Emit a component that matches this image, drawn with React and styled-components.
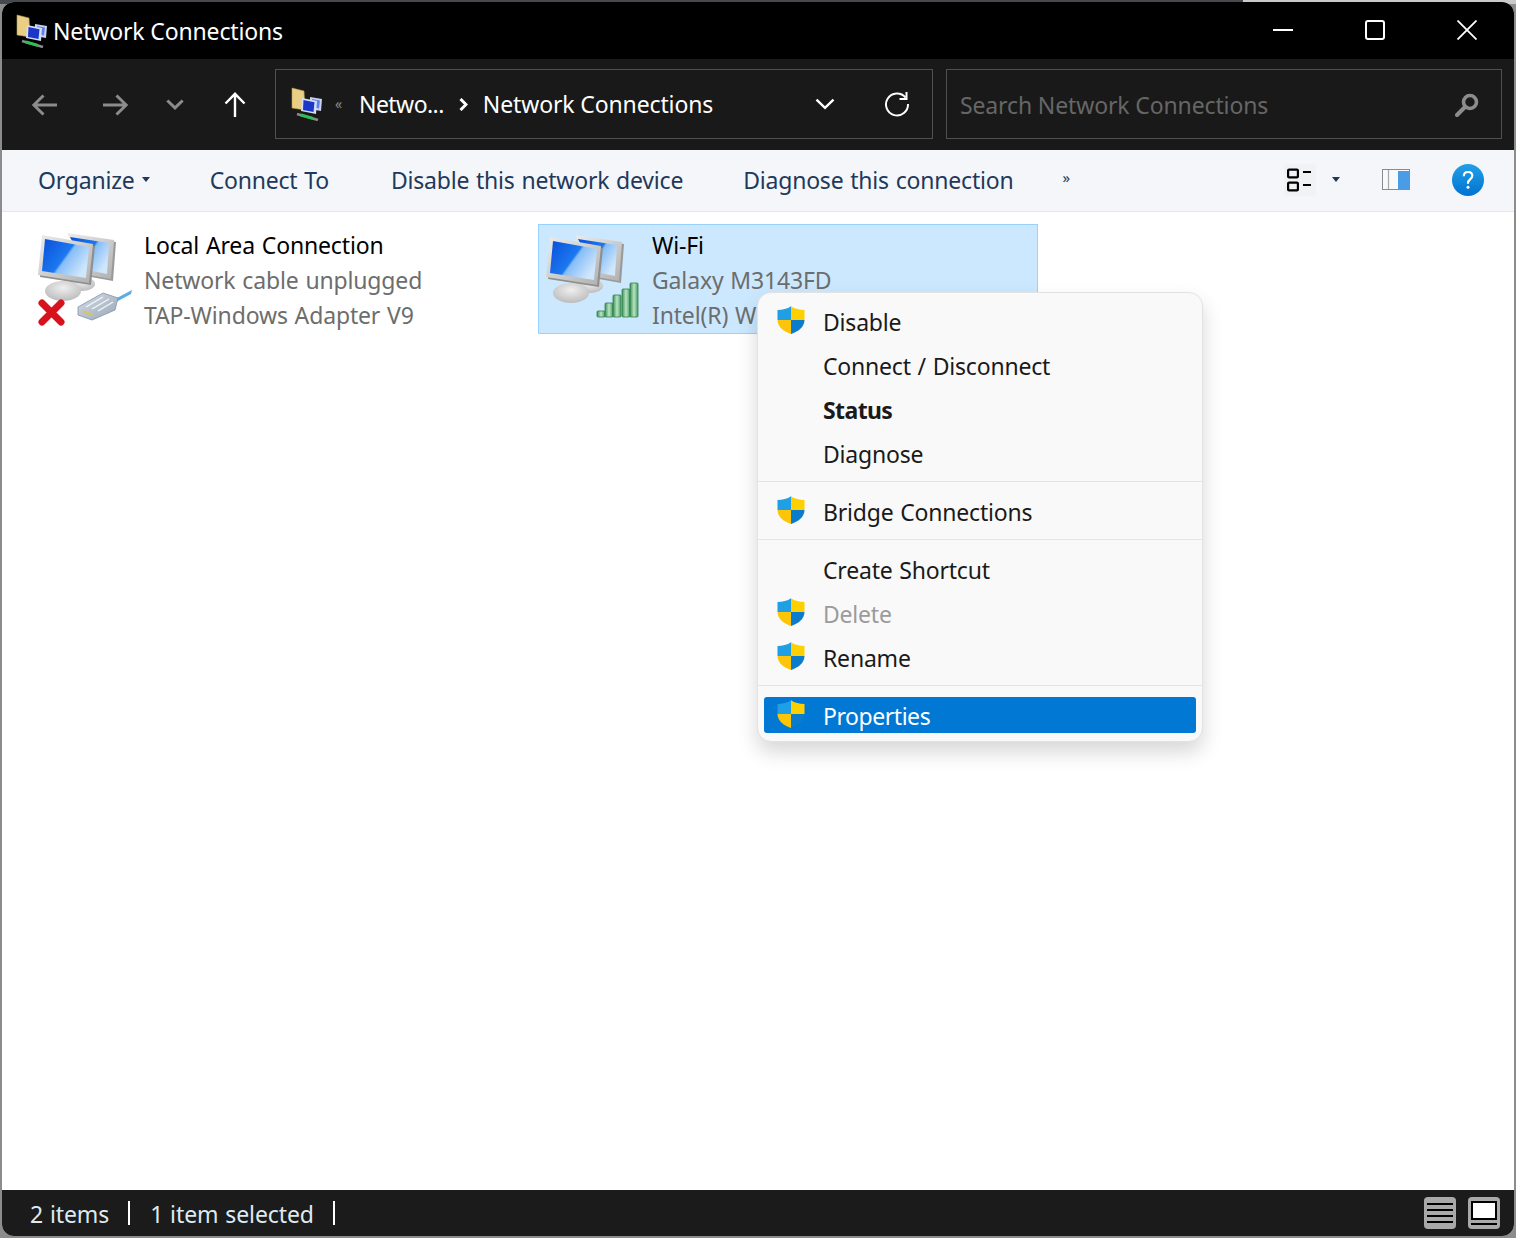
import React from 'react'
import styled, { createGlobalStyle } from 'styled-components'

const Global = createGlobalStyle`
  html, body { margin: 0; padding: 0; }
  body {
    width: 1516px;
    height: 1238px;
    overflow: hidden;
    background: linear-gradient(90deg, #46494e 0, #46494e 82%, #c9c9c9 82%) 0 0 / 100% 4px no-repeat, #8c8c8c;
    font-family: "Noto Sans", "Open Sans", "Liberation Sans", sans-serif;
    letter-spacing: -0.1px;
  }
`

const Desktop = styled.div`
  box-sizing: border-box;
  height: 1238px;
  padding: 2px;
`

const Window = styled.div`
  height: 1234px;
  display: flex;
  flex-direction: column;
  overflow: hidden;
  border-radius: 12px;
  background: #fff;
`

const TitleBar = styled.div`
  flex: 0 0 57px;
  display: flex;
  align-items: center;
  background: #000;
  color: #fff;
  padding-left: 12px;
`

const WindowTitle = styled.span`
  margin-left: 5px;
  padding-top: 1px;
  font-size: 23px;
  letter-spacing: -0.15px;
`

const WinControls = styled.div`
  margin: -2px 1px 0 auto;
  display: flex;
`

const WinBtn = styled.div`
  width: 92px;
  height: 57px;
  display: flex;
  align-items: center;
  justify-content: center;
`

const NavBar = styled.div`
  flex: 0 0 91px;
  box-sizing: border-box;
  display: flex;
  align-items: center;
  background: #191919;
  padding: 0 12px 1px 8px;
`

const NavBtn = styled.div`
  width: ${(p) => p.$w || 70}px;
  height: 70px;
  display: flex;
  align-items: center;
  justify-content: center;
  padding-top: 1px;
`

const FieldBox = styled.div`
  box-sizing: border-box;
  height: 70px;
  display: flex;
  align-items: center;
  border: 1px solid #4f4f4f;
  color: #fff;
  font-size: 23px;
  letter-spacing: -0.13px;
`

const AddressBox = styled(FieldBox)`
  width: 658px;
  margin-left: 5px;
  padding-left: 13px;
`

const SearchBox = styled(FieldBox)`
  flex: 1;
  margin-left: 13px;
  padding: 2px 22px 0 13px;
  color: #666;
  justify-content: space-between;
`

const Crumb = styled.span`
  white-space: nowrap;
  letter-spacing: ${(p) => (p.$tight ? '-0.55px' : 'inherit')};
`

const CrumbSep = styled.span`
  margin: 0 15px 0 15px;
  display: flex;
`

const Overflow = styled.span`
  margin: 0 17px 0 12px;
  color: #8a8a8a;
  font-size: 14px;
  line-height: 1;
`

const AddressEnd = styled.div`
  margin-left: auto;
  display: flex;
  align-items: center;
  gap: 49px;
  padding-right: 22px;
`

const Toolbar = styled.div`
  flex: 0 0 62px;
  box-sizing: border-box;
  display: flex;
  align-items: center;
  gap: 60px;
  padding: 0 30px 2px 36px;
  background: #f4f6f9;
  border-bottom: 1px solid #e3e6ea;
  color: #1e395b;
  font-size: 23px;
`

const ToolItem = styled.span`
  display: flex;
  align-items: center;
  gap: 7px;
  white-space: nowrap;
  letter-spacing: -0.2px;
  word-spacing: 1px;
  padding-right: ${(p) => p.$extra || 0}px;
`

const More = styled.span`
  margin: -4px 0 0 -11px;
  font-size: 15px;
  line-height: 1;
`

const ToolIcons = styled.div`
  margin-left: auto;
  display: flex;
  align-items: center;
`

const ViewBtn = styled.div`
  width: 32px;
  height: 32px;
  display: flex;
  align-items: center;
  justify-content: center;
  background: #f1f2f4;
  border-radius: 3px;
`

const ViewCaret = styled.span`
  margin: 0 42px 0 16px;
  display: flex;
`

const PaneBtn = styled.span`
  display: flex;
  margin-right: 42px;
`

const Content = styled.div`
  flex: 1;
  position: relative;
  display: flex;
  align-items: flex-start;
  gap: 8px;
  padding: 12px 0 0 28px;
`

const Tile = styled.div`
  box-sizing: border-box;
  width: 500px;
  height: 110px;
  display: flex;
  padding: 3px 0 0 3px;
  background: ${(p) => (p.$selected ? '#cce8ff' : 'transparent')};
  border: 1px solid ${(p) => (p.$selected ? '#99d1ff' : 'transparent')};
`

const TileText = styled.div`
  margin: -3px 0 0 10px;
  padding-top: 3px;
  font-size: 23px;
  line-height: 35px;
  letter-spacing: -0.15px;
  word-spacing: 1px;
  color: #6d6d6d;
  white-space: nowrap;
`

const TileName = styled.div`
  color: #000;
`

const Menu = styled.div`
  position: absolute;
  left: 755px;
  top: 80px;
  box-sizing: border-box;
  width: 446px;
  height: 450px;
  padding-top: 8px;
  background: #f9f9f9;
  border: 1px solid #e2e2e2;
  border-radius: 14px;
  box-shadow: 0 10px 20px rgba(0, 0, 0, 0.16);
  font-size: 23px;
  color: #1a1a1a;
  word-spacing: 1px;
  letter-spacing: -0.2px;
`

const MenuRow = styled.div`
  box-sizing: border-box;
  height: 44px;
  display: flex;
  align-items: center;
  padding: 0 0 2px 19px;
  font-weight: ${(p) => (p.$bold ? 700 : 400)};
  letter-spacing: ${(p) => (p.$bold ? '-0.6px' : 'inherit')};
  color: ${(p) => (p.$disabled ? '#9b9b9b' : 'inherit')};
`

const HotRow = styled(MenuRow)`
  height: 36px;
  margin: 0 6px;
  padding: 1px 0 0 13px;
  background: #0078d4;
  color: #fff;
  letter-spacing: -0.45px;
  border-radius: 3px;
`

const ShieldSlot = styled.span`
  flex: 0 0 28px;
  height: 28px;
  margin: -4px 18px 0 0;
`

const MenuSep = styled.div`
  height: 1px;
  margin: ${(p) => (p.$last ? '4px 0 11px' : '4px 0 9px')};
  background: #e4e4e4;
`

const StatusBar = styled.div`
  flex: 0 0 46px;
  box-sizing: border-box;
  display: flex;
  align-items: center;
  padding: 0 14px 0 28px;
  background: #1b1b1b;
  color: #dfe9f2;
  font-size: 23px;
  word-spacing: 1px;
`

const StatusPart = styled.span`
  white-space: nowrap;
  padding: 2px 21px 0 0;
  margin-right: 20px;
  position: relative;
  &::after {
    content: '';
    position: absolute;
    right: 0;
    top: 5px;
    bottom: 5px;
    width: 2px;
    background: #fff;
  }
`

const StatusIcons = styled.div`
  margin-left: auto;
  display: flex;
  gap: 12px;
`

const StatusBtn = styled.div`
  width: 32px;
  height: 32px;
  display: flex;
  align-items: center;
  justify-content: center;
  background: #a9a9a9;
  border-radius: 4px;
`

const Arrow = ({ dir = 'left', color = '#8c8c8c' }) => {
  const turn = { left: 0, right: 180, up: 90 }[dir]
  return (
    <svg width="26" height="26" viewBox="0 0 26 26" style={{ transform: `rotate(${turn}deg)` }}>
      <path d="M1.5 13H25M11.5 3.500L1.800 13l9.700 9.500" fill="none" stroke={color} strokeWidth={dir === 'up' ? 2.4 : 3} />
    </svg>
  )
}

const Chevron = ({ color = '#8c8c8c', w = 18, sw = 3 }) => (
  <svg width={w} height={w * 0.6} viewBox="0 0 18 11">
    <path d="M1.200 1.500L9 9l7.800-7.500" fill="none" stroke={color} strokeWidth={sw} />
  </svg>
)

const Caret = ({ color = '#1e395b' }) => (
  <svg width="8" height="5" viewBox="0 0 8 5">
    <path d="M0 0h8L4 5z" fill={color} />
  </svg>
)

const Shield = () => (
  <svg width="28" height="28" viewBox="0 0 28 28">
    <path d="M14 .3C10.500 3 5.500 4 .5 4v10h13.500z" fill="#1f9fe4" />
    <path d="M14 .3C17.500 3 22.500 4 27.500 4v10H14z" fill="#ffd000" />
    <path d="M.5 14c0 7 6.500 11.800 13.500 14V14z" fill="#fdc50a" />
    <path d="M27.500 14c0 7-6.500 11.800-13.500 14V14z" fill="#0b7bcb" />
  </svg>
)

const MonitorDefs = () => (
  <defs>
    <linearGradient id="screen" x1="0" y1="0" x2="1" y2="0.6">
      <stop offset="0" stopColor="#0a50d8" />
      <stop offset="0.55" stopColor="#1c78f0" />
      <stop offset="0.6" stopColor="#86bdf8" />
      <stop offset="1" stopColor="#cfe6fb" />
    </linearGradient>
    <linearGradient id="bezel" x1="0" y1="0" x2="1" y2="1">
      <stop offset="0" stopColor="#ececec" />
      <stop offset="1" stopColor="#b0b0b0" />
    </linearGradient>
    <radialGradient id="foot" cx="0.5" cy="0.35" r="0.65">
      <stop offset="0" stopColor="#efefef" />
      <stop offset="1" stopColor="#bcbcbc" />
    </radialGradient>
    <linearGradient id="bar" x1="0" y1="0" x2="1" y2="0">
      <stop offset="0" stopColor="#3f8f5a" />
      <stop offset="0.5" stopColor="#b8e6c0" />
      <stop offset="1" stopColor="#4b9a66" />
    </linearGradient>
    <linearGradient id="plug" x1="0" y1="0" x2="1" y2="1">
      <stop offset="0" stopColor="#d6dde6" />
      <stop offset="1" stopColor="#97a6b6" />
    </linearGradient>
  </defs>
)

const Monitors = () => (
  <g>
    <path d="M35 7l47 7-3 39-22-4z" fill="#9a9a9a" />
    <path d="M33 5l47 7-3 39-22-4z" fill="url(#bezel)" />
    <path d="M36 9l39 6-2 31-20-4z" fill="url(#screen)" />
    <ellipse cx="48" cy="56" rx="13" ry="7" fill="url(#foot)" />
    <ellipse cx="29" cy="63" rx="18" ry="10" fill="url(#foot)" />
    <path d="M10 9l51 9-4 39L6 49z" fill="#8f8f8f" />
    <path d="M8 7l51 9-4 39L4 47z" fill="url(#bezel)" />
    <path d="M11 11l44 8-3 31L8 43z" fill="url(#screen)" />
  </g>
)

const LanIcon = () => (
  <svg width="100" height="100" viewBox="0 0 100 100">
    <MonitorDefs />
    <Monitors />
    <path d="M8 75l19 19M27 75L8 94" stroke="#d8121c" strokeWidth="7" strokeLinecap="round" />
    <path d="M81 71l17-9-1 4-15 8z" fill="#58aee2" />
    <path d="M44 79l25-14 15 5-3 12-23 10-14-5z" fill="url(#plug)" stroke="#8294a8" strokeWidth="0.800" />
    <path d="M52 79l17-10M58 81l17-10M64 83l15-9" stroke="#f2f5f8" strokeWidth="1.400" />
    <path d="M49 82l10 4-1 2-10-4z" fill="#d6c56a" />
  </svg>
)

const WifiIcon = () => (
  <svg width="100" height="100" viewBox="0 0 100 100">
    <MonitorDefs />
    <g transform="translate(0 2)">
      <Monitors />
    </g>
    {[[0, 6], [8, 14], [16, 22], [25, 28], [33, 34]].map(([x, h]) => (
      <rect key={x} x={55 + x} y={89 - h} width="8" height={h} rx="1" fill="url(#bar)" stroke="#2f7f4c" strokeWidth="0.800" />
    ))}
  </svg>
)

const FolderNetIcon = () => (
  <svg width="34" height="34" viewBox="0 0 34 34">
    <path d="M3 1l12 3 1 19-13-2z" fill="#e9cf86" stroke="#b89a4a" strokeWidth="0.600" />
    <path d="M21 10l12 2-1 12-11-2z" fill="#c9d3f0" />
    <path d="M23 12l8 1.500-1 8-7-1.500z" fill="#5f80e8" />
    <path d="M13 11l15 3-1 13-15-3z" fill="#d6dcf2" />
    <path d="M14.500 13l11 2.200-1 9.800-10.500-2z" fill="#1c37c8" />
    <path d="M8 27l21 6" stroke="#8a8a8a" strokeWidth="2.600" />
    <path d="M12 28l12 3.400" stroke="#27c24f" strokeWidth="3" />
  </svg>
)

const ViewIcon = () => (
  <svg width="26" height="24" viewBox="0 0 26 24">
    <g fill="none" stroke="#000" strokeWidth="2.200">
      <rect x="1.100" y="1.600" width="9.800" height="7.800" rx="1" />
      <rect x="1.100" y="14.600" width="9.800" height="7.800" rx="1" />
    </g>
    <path d="M16 4h8M16 17h8" stroke="#000" strokeWidth="2" />
  </svg>
)

const PaneIcon = () => (
  <svg width="28" height="21" viewBox="0 0 28 21">
    <rect x=".5" y=".5" width="27" height="20" fill="#f8f9fb" stroke="#8b8b8b" />
    <path d="M6.500 1v19" stroke="#a8a8a8" strokeWidth="1.200" />
    <rect x="16" y="2" width="11" height="18" fill="#4a9ce6" />
  </svg>
)

const HelpIcon = () => (
  <svg width="32" height="32" viewBox="0 0 32 32">
    <defs>
      <linearGradient id="help" x1="0" y1="0" x2="0" y2="1">
        <stop offset="0" stopColor="#22a0e6" />
        <stop offset="1" stopColor="#0272d2" />
      </linearGradient>
    </defs>
    <circle cx="16" cy="16" r="16" fill="url(#help)" />
    <path d="M11.800 12.200c0-2.600 1.800-4.200 4.300-4.200s4.200 1.500 4.200 3.700c0 3.500-4.300 3.700-4.300 7.100v1" fill="none" stroke="#fff" strokeWidth="2.200" />
    <circle cx="16" cy="23.300" r="1.500" fill="#fff" />
  </svg>
)

const menuItems = [
  [
    { label: 'Disable', shield: true },
    { label: 'Connect / Disconnect' },
    { label: 'Status', bold: true },
    { label: 'Diagnose' },
  ],
  [{ label: 'Bridge Connections', shield: true }],
  [
    { label: 'Create Shortcut' },
    { label: 'Delete', shield: true, disabled: true },
    { label: 'Rename', shield: true },
  ],
]

export default function App() {
  return (
    <Desktop>
      <Global />
      <Window>
        <TitleBar>
          <FolderNetIcon />
          <WindowTitle>Network Connections</WindowTitle>
          <WinControls>
            <WinBtn>
              <svg width="20" height="2"><path d="M0 1h20" stroke="#fff" strokeWidth="2" /></svg>
            </WinBtn>
            <WinBtn>
              <svg width="20" height="20"><rect x="1" y="1" width="18" height="18" rx="2" fill="none" stroke="#fff" strokeWidth="2" /></svg>
            </WinBtn>
            <WinBtn>
              <svg width="20" height="20"><path d="M.5.500l19 19M19.500.500l-19 19" stroke="#fff" strokeWidth="1.800" /></svg>
            </WinBtn>
          </WinControls>
        </TitleBar>

        <NavBar>
          <NavBtn><Arrow dir="left" /></NavBtn>
          <NavBtn><Arrow dir="right" /></NavBtn>
          <NavBtn $w={50}><Chevron /></NavBtn>
          <NavBtn><Arrow dir="up" color="#fff" /></NavBtn>
          <AddressBox>
            <FolderNetIcon />
            <Overflow>«</Overflow>
            <Crumb $tight>Netwo...</Crumb>
            <CrumbSep>
              <svg width="9" height="13" viewBox="0 0 9 13"><path d="M1.500 1l5.500 5.500L1.500 12" fill="none" stroke="#fff" strokeWidth="3" /></svg>
            </CrumbSep>
            <Crumb>Network Connections</Crumb>
            <AddressEnd>
              <Chevron color="#fff" w={20} sw={2.200} />
              <svg width="26" height="26" viewBox="0 0 26 26">
                <path d="M21.500 6.500A11 11 0 1 0 24 13" fill="none" stroke="#fff" strokeWidth="2" />
                <path d="M22.500 1v7h-7" fill="none" stroke="#fff" strokeWidth="2" />
              </svg>
            </AddressEnd>
          </AddressBox>
          <SearchBox>
            <span>Search Network Connections</span>
            <svg width="24" height="24" viewBox="0 0 24 24">
              <circle cx="15" cy="9" r="6.500" fill="none" stroke="#8c8c8c" strokeWidth="3.600" />
              <path d="M10 14l-8 8" stroke="#8c8c8c" strokeWidth="4" strokeLinecap="round" />
            </svg>
          </SearchBox>
        </NavBar>

        <Toolbar>
          <ToolItem>Organize <Caret /></ToolItem>
          <ToolItem $extra={2}>Connect To</ToolItem>
          <ToolItem>Disable this network device</ToolItem>
          <ToolItem>Diagnose this connection</ToolItem>
          <More>»</More>
          <ToolIcons>
            <ViewBtn><ViewIcon /></ViewBtn>
            <ViewCaret><Caret /></ViewCaret>
            <PaneBtn><PaneIcon /></PaneBtn>
            <HelpIcon />
          </ToolIcons>
        </Toolbar>

        <Content>
          <Tile>
            <LanIcon />
            <TileText>
              <TileName>Local Area Connection</TileName>
              <div>Network cable unplugged</div>
              <div>TAP-Windows Adapter V9</div>
            </TileText>
          </Tile>
          <Tile $selected>
            <WifiIcon />
            <TileText>
              <TileName>Wi-Fi</TileName>
              <div>Galaxy M3143FD</div>
              <div>Intel(R) W</div>
            </TileText>
          </Tile>

          <Menu>
            {menuItems.map((group, i) => (
              <React.Fragment key={i}>
                {group.map((item) => (
                  <MenuRow key={item.label} $bold={item.bold} $disabled={item.disabled}>
                    <ShieldSlot>{item.shield && <Shield />}</ShieldSlot>
                    {item.label}
                  </MenuRow>
                ))}
                <MenuSep $last={i === menuItems.length - 1} />
              </React.Fragment>
            ))}
            <HotRow>
              <ShieldSlot><Shield /></ShieldSlot>
              Properties
            </HotRow>
          </Menu>
        </Content>

        <StatusBar>
          <StatusPart>2 items</StatusPart>
          <StatusPart>1 item selected</StatusPart>
          <StatusIcons>
            <StatusBtn>
              <svg width="26" height="24"><path d="M0 3h26M0 9h26M0 15h26M0 21h26" stroke="#000" strokeWidth="2" /></svg>
            </StatusBtn>
            <StatusBtn>
              <svg width="26" height="25">
                <rect x="1" y="1" width="24" height="17" fill="#fff" stroke="#000" strokeWidth="2" />
                <path d="M0 23h26" stroke="#000" strokeWidth="2" />
              </svg>
            </StatusBtn>
          </StatusIcons>
        </StatusBar>
      </Window>
    </Desktop>
  )
}
